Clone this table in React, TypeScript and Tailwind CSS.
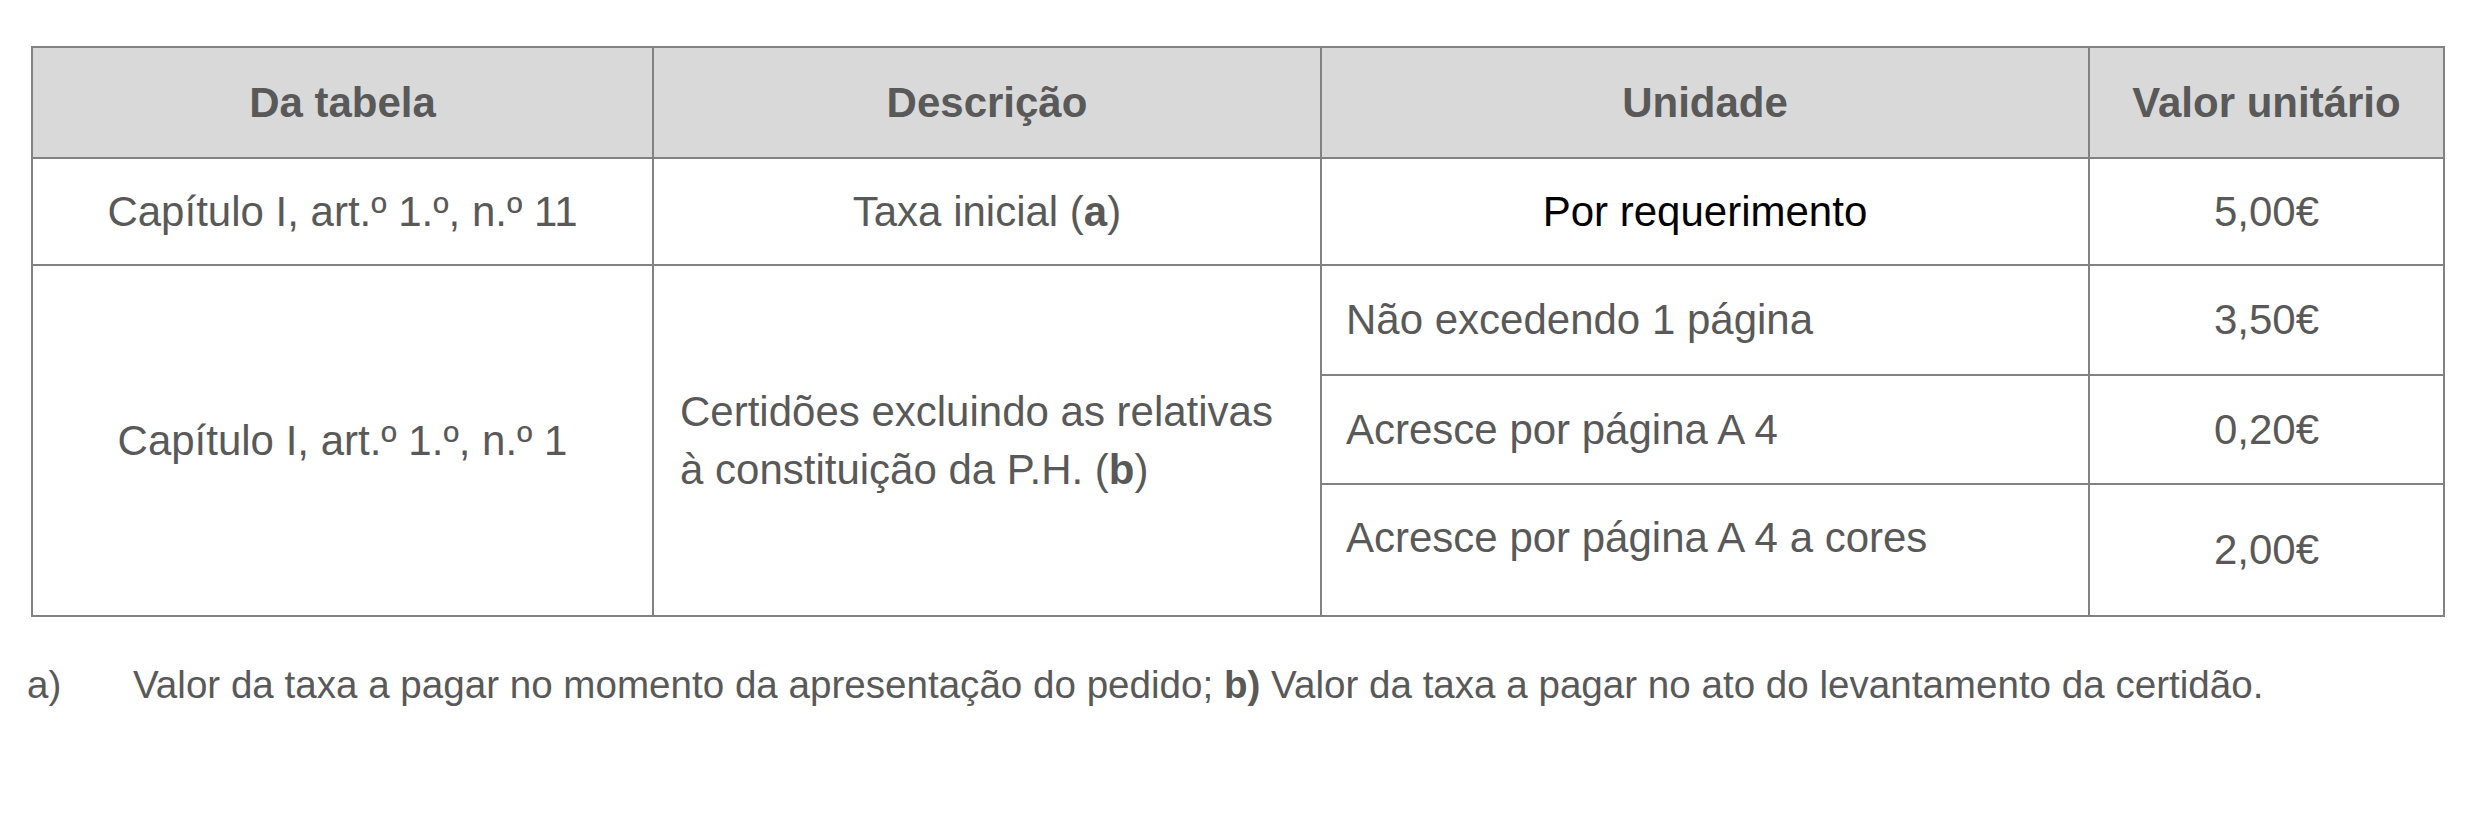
const border = "border-2 border-[#828282]";

const App = () => {
  return (
    <div className="w-[2480px] h-[827px] bg-white font-['Liberation_Sans',Arial,sans-serif] text-[#595959] text-[42px] leading-[58px]">
      <div className="pt-[46px] pl-[31px]">
        <table className="border-collapse table-fixed w-[2412px]">
          <colgroup>
            <col className="w-[621px]" />
            <col className="w-[668px]" />
            <col className="w-[768px]" />
            <col className="w-[355px]" />
          </colgroup>
          <thead>
            <tr className="h-[111px] bg-[#d9d9d9] font-bold">
              <th className={`${border} text-center`}>Da tabela</th>
              <th className={`${border} text-center`}>Descrição</th>
              <th className={`${border} text-center`}>Unidade</th>
              <th className={`${border} text-center`}>Valor unitário</th>
            </tr>
          </thead>
          <tbody>
            <tr className="h-[107px]">
              <td className={`${border} text-center`}>Capítulo I, art.º 1.º, n.º 11</td>
              <td className={`${border} text-center`}>
                Taxa inicial (<b>a</b>)
              </td>
              <td className={`${border} text-center text-black`}>Por requerimento</td>
              <td className={`${border} text-center`}>5,00€</td>
            </tr>
            <tr className="h-[110px]">
              <td rowSpan={3} className={`${border} text-center`}>
                Capítulo I, art.º 1.º, n.º 1
              </td>
              <td rowSpan={3} className={`${border} px-[26px]`}>
                Certidões excluindo as relativas
                <br />à constituição da P.H. (<b>b</b>)
              </td>
              <td className={`${border} px-[24px]`}>Não excedendo 1 página</td>
              <td className={`${border} text-center`}>3,50€</td>
            </tr>
            <tr className="h-[109px]">
              <td className={`${border} px-[24px]`}>Acresce por página A 4</td>
              <td className={`${border} text-center`}>0,20€</td>
            </tr>
            <tr className="h-[132px]">
              <td className={`${border} px-[24px] pb-[24px]`}>Acresce por página A 4 a cores</td>
              <td className={`${border} text-center`}>2,00€</td>
            </tr>
          </tbody>
        </table>
      </div>
      <div className="flex mt-[44px] pl-[27px] text-[38.6px] leading-[48px]">
        <span className="w-[106px] shrink-0">a)</span>
        <p>
          Valor da taxa a pagar no momento da apresentação do pedido; <b>b)</b> Valor da taxa a pagar no ato do
          levantamento da certidão.
        </p>
      </div>
    </div>
  );
};

export default App;
